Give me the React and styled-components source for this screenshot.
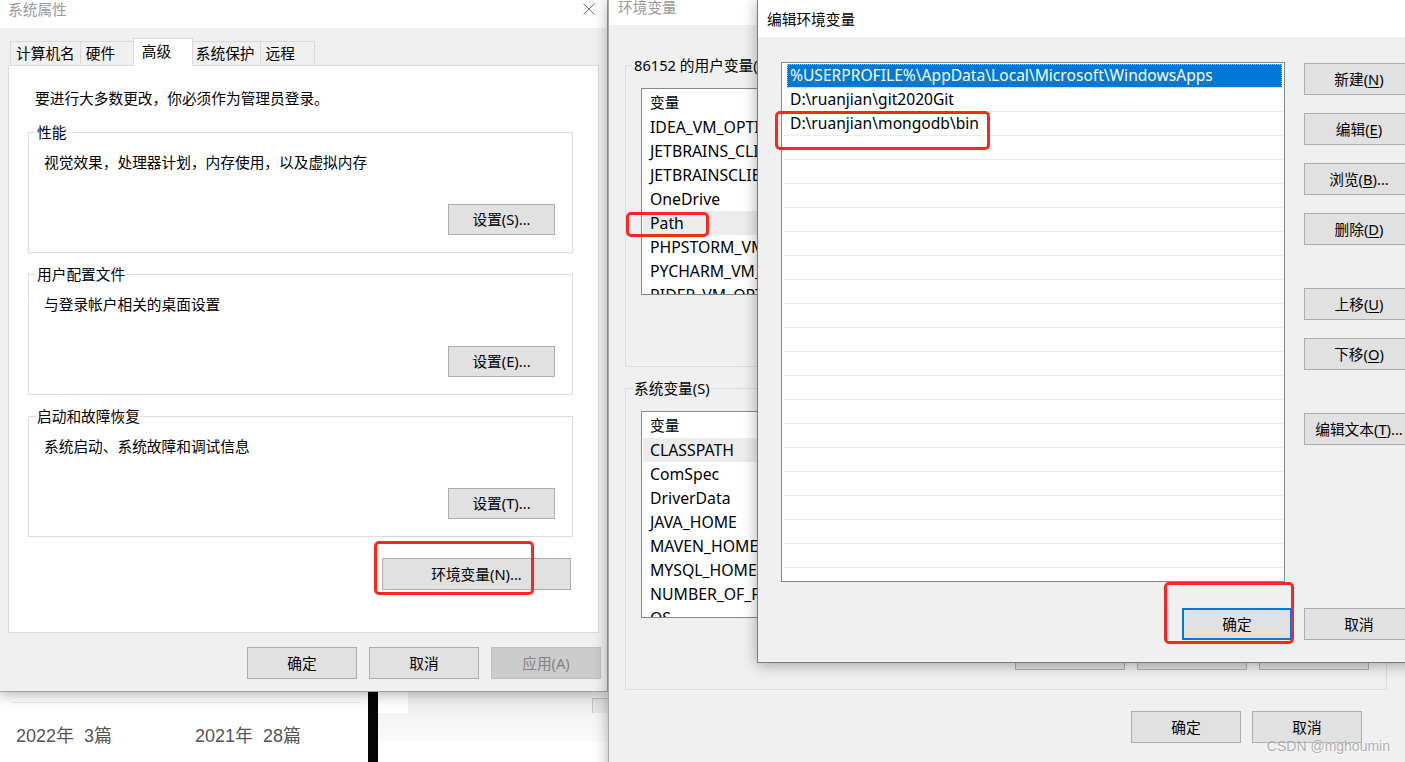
import React from "react";
import styled, { createGlobalStyle, css } from "styled-components";

const UI_FONT = `"Noto Sans", "Noto Sans CJK SC", sans-serif`;

const Global = createGlobalStyle`
  html, body { margin: 0; padding: 0; background: #fff; }
  body { font-family: ${UI_FONT}; }
  * { box-sizing: border-box; }
`;

const Desktop = styled.div`
  position: relative;
  width: 1405px;
  height: 762px;
  overflow: hidden;
  background: #fff;
  font-family: ${UI_FONT};
  font-size: 14.7px;
  color: #000;
`;

/* ---------- page behind the dialogs ---------- */
const BackPage = styled.div`
  display: flex;
  height: 100%;
  padding-top: 691px;
`;
const ArchiveColumn = styled.div`
  width: 368px;
  padding: 11px 8px 0 12px;
`;
const ArchiveDivider = styled.div`
  height: 1px;
  background: #e9e9e9;
`;
const ArchiveRow = styled.div`
  display: grid;
  grid-template-columns: 179px auto;
  padding-left: 4px;
  margin-top: 22px;
  font-family: "Liberation Sans", Arial, "Noto Sans CJK SC", sans-serif;
  font-size: 18px;
  line-height: 22px;
  color: #555;
  white-space: pre;
`;
const BlackBar = styled.div`
  width: 10px;
  background: #050505;
`;
const BackRight = styled.div`
  width: 230px;
  display: flex;
  flex-direction: column;
`;
const BackStrip = styled.div`
  height: 22px;
  display: flex;
  padding-left: 30px;
`;
const BackGray = styled.div`
  flex: 1;
  background: #f0f0f0;
  display: flex;
  justify-content: flex-end;
  align-items: flex-end;
`;
const BackGrayKnob = styled.div`
  width: 16px;
  height: 15px;
  background: #e6e6e6;
  border-left: 1px solid #c4c4c4;
  border-top: 1px solid #c4c4c4;
`;
const BackFade = styled.div`
  height: 29px;
  background: linear-gradient(#f3f3f3, #fbfbfb);
`;

/* ---------- generic window pieces ---------- */
const Window = styled.section`
  position: absolute;
  left: ${(p) => p.$x}px;
  top: ${(p) => p.$y}px;
  width: ${(p) => p.$w}px;
  height: ${(p) => p.$h}px;
  z-index: ${(p) => p.$z};
  display: flex;
  flex-direction: column;
  background: #f0f0f0;
  border: 1px solid ${(p) => p.$border};
  box-shadow: 0 2px 14px rgba(0, 0, 0, 0.32);
`;

const TitleBar = styled.header`
  flex: none;
  display: flex;
  align-items: ${(p) => (p.$center ? "center" : "flex-start")};
  height: ${(p) => p.$h}px;
  padding-left: ${(p) => p.$pad}px;
  background: #fff;
  color: ${(p) => (p.$active ? "#000" : "#9a9a9a")};
  line-height: ${(p) => p.$lh || 18}px;
`;

const CloseIcon = styled.svg`
  margin: 3px 12px 0 auto;
  width: 12px;
  height: 12px;
`;

const Button = styled.button`
  flex: none;
  width: ${(p) => p.$w || 110}px;
  height: ${(p) => p.$h || 32}px;
  padding: 0;
  font: 14.7px/1 ${UI_FONT};
  color: #000;
  background: #e1e1e1;
  border: 1px solid #adadad;
  white-space: nowrap;
  ${(p) =>
    p.$disabled &&
    css`
      background: #cccccc;
      border-color: #bfbfbf;
      color: #838383;
    `}
  ${(p) =>
    p.$default &&
    css`
      border: 2px solid #0078d7;
    `}
`;

const Key = styled.span`
  text-decoration: underline;
  text-underline-offset: 2px;
`;

const GroupBox = styled.div`
  position: relative;
  flex: none;
  height: ${(p) => p.$h}px;
  border: 1px solid #dcdcdc;
  display: flex;
  flex-direction: column;
  padding: ${(p) => p.$pad};
  & + & {
    margin-top: ${(p) => p.$gap}px;
  }
`;
const GroupLabel = styled.span`
  position: absolute;
  left: 7px;
  top: -11px;
  padding: 0 1px;
  line-height: 20px;
  background: ${(p) => p.$bg};
  white-space: nowrap;
`;

/* ---------- 系统属性 ---------- */
const SysBody = styled.div`
  padding: 10px 8px 0 8px;
  display: flex;
  flex-direction: column;
`;
const TabStrip = styled.div`
  position: relative;
  z-index: 1;
  display: flex;
  align-items: flex-end;
  height: 28px;
  margin-bottom: -1px;
  padding-left: 2px;
`;
const Tab = styled.div`
  position: relative;
  min-width: 55px;
  height: 24px;
  margin-bottom: 1px;
  padding: 0 5px;
  border: 1px solid #d9d9d9;
  border-bottom: none;
  background: #f0f0f0;
  line-height: 23px;
  white-space: nowrap;
  & + & {
    margin-left: -1px;
  }
  ${(p) =>
    p.$active &&
    css`
      z-index: 2;
      min-width: 60px;
      height: 28px;
      margin-bottom: 0;
      padding: 0 8px;
      background: #fff;
      line-height: 25px;
      && {
        margin-left: -2px;
        margin-right: -2px;
      }
    `}
`;
const TabPanel = styled.div`
  height: 568px;
  display: flex;
  flex-direction: column;
  padding: 22px 25px 0 19px;
  background: #fff;
  border: 1px solid #d9d9d9;
`;
const Notice = styled.p`
  margin: 0 0 24px 7px;
  line-height: 20px;
`;
const GroupText = styled.div`
  line-height: 20px;
`;
const GroupAction = styled(Button)`
  margin-top: auto;
  align-self: flex-end;
`;
const EnvButton = styled(Button)`
  margin: 21px 2px 0 0;
  align-self: flex-end;
`;
const DialogFooter = styled.div`
  display: flex;
  justify-content: flex-end;
  gap: ${(p) => p.$gap}px;
  padding: ${(p) => p.$pad};
  width: ${(p) => (p.$w ? `${p.$w}px` : "auto")};
`;

/* ---------- 环境变量 ---------- */
const EnvBody = styled.div`
  display: flex;
  flex-direction: column;
  padding: 40px 19px 0 16px;
`;
const VarList = styled.div`
  flex: none;
  height: 207px;
  padding: 0 1px;
  background: #fff;
  border: 1px solid #828790;
  overflow: hidden;
`;
const VarHeader = styled.div`
  height: 26px;
  line-height: 26px;
  padding-left: 7px;
`;
const VarItem = styled.div`
  height: 24px;
  line-height: 24px;
  padding-left: 7px;
  font-size: 15.8px;
  white-space: nowrap;
  background: ${(p) => (p.$sel ? "#ececec" : "transparent")};
`;
const VarButtons = styled.div`
  display: flex;
  justify-content: flex-end;
  gap: 12px;
  margin-top: 20px;
`;

/* ---------- 编辑环境变量 ---------- */
const EditBody = styled.div`
  display: flex;
  flex-direction: column;
  padding: 25px 0 0 23px;
`;
const EditMain = styled.div`
  display: flex;
  align-items: flex-start;
`;
const PathList = styled.div`
  flex: none;
  width: 504px;
  height: 520px;
  padding: 1px 1px 0;
  background: #fff;
  border: 1px solid #828790;
  overflow: hidden;
`;
const PathRow = styled.div`
  height: 24px;
  line-height: 23px;
  padding-left: 7px;
  font-size: 15.6px;
  border-bottom: 1px solid #ebebeb;
  white-space: nowrap;
  ${(p) =>
    p.$sel &&
    css`
      margin: 0 1px 0 4px;
      padding-left: 3px;
      background: #0078d7;
      color: #fff;
      outline: 1px dotted rgba(255, 190, 120, 0.9);
      outline-offset: -1px;
    `}
`;
const SideButtons = styled.div`
  display: flex;
  flex-direction: column;
  gap: 18px;
  margin: 1px 0 0 19px;
`;
const SideButton = styled(Button)`
  ${(p) =>
    p.$spaced &&
    css`
      margin-top: 25px;
    `}
`;

/* ---------- overlays ---------- */
const Highlight = styled.div`
  position: absolute;
  z-index: 20;
  left: ${(p) => p.$x}px;
  top: ${(p) => p.$y}px;
  width: ${(p) => p.$w}px;
  height: ${(p) => p.$h}px;
  border: 3px solid #f7291f;
  border-radius: 5px;
  pointer-events: none;
`;
const Watermark = styled.div`
  position: absolute;
  z-index: 21;
  right: 15px;
  bottom: 8px;
  font-family: "Liberation Sans", Arial, sans-serif;
  font-size: 14px;
  color: rgba(110, 110, 110, 0.55);
  text-shadow: 0 0 2px #fff;
`;

const userVars = [
  "IDEA_VM_OPTIONS",
  "JETBRAINS_CLIENT_VM_OPTIONS",
  "JETBRAINSCLIENT_VM_OPTIONS",
  "OneDrive",
  "Path",
  "PHPSTORM_VM_OPTIONS",
  "PYCHARM_VM_OPTIONS",
  "RIDER_VM_OPTIONS",
];
const sysVars = [
  "CLASSPATH",
  "ComSpec",
  "DriverData",
  "JAVA_HOME",
  "MAVEN_HOME",
  "MYSQL_HOME",
  "NUMBER_OF_PROCESSORS",
  "OS",
  "Path",
];
const paths = [
  "%USERPROFILE%\\AppData\\Local\\Microsoft\\WindowsApps",
  "D:\\ruanjian\\git2020Git",
  "D:\\ruanjian\\mongodb\\bin",
];

function SystemProperties() {
  const groups = [
    { title: "性能", text: "视觉效果，处理器计划，内存使用，以及虚拟内存", btn: "设置(S)..." },
    { title: "用户配置文件", text: "与登录帐户相关的桌面设置", btn: "设置(E)..." },
    { title: "启动和故障恢复", text: "系统启动、系统故障和调试信息", btn: "设置(T)..." },
  ];
  return (
    <Window $x={-1} $y={-1} $w={609} $h={693} $z={1} $border="#a0a0a0">
      <TitleBar $h={28} $pad={8}>
        系统属性
        <CloseIcon viewBox="0 0 12 12">
          <path d="M0.5 0.5 L11.5 11.5 M11.5 0.5 L0.5 11.5" stroke="#6b6b6b" strokeWidth="1" fill="none" />
        </CloseIcon>
      </TitleBar>
      <SysBody>
        <TabStrip>
          <Tab>计算机名</Tab>
          <Tab>硬件</Tab>
          <Tab $active>高级</Tab>
          <Tab>系统保护</Tab>
          <Tab>远程</Tab>
        </TabStrip>
        <TabPanel>
          <Notice>要进行大多数更改，你必须作为管理员登录。</Notice>
          {groups.map((g) => (
            <GroupBox key={g.title} $h={121} $gap={21} $pad="19px 17px 17px 15px">
              <GroupLabel $bg="#fff">{g.title}</GroupLabel>
              <GroupText>{g.text}</GroupText>
              <GroupAction $w={107} $h={31}>
                {g.btn}
              </GroupAction>
            </GroupBox>
          ))}
          <EnvButton $w={189}>环境变量(N)...</EnvButton>
        </TabPanel>
      </SysBody>
      <DialogFooter $gap={12} $pad="14px 6px 0 0">
        <Button>确定</Button>
        <Button>取消</Button>
        <Button $disabled>应用(A)</Button>
      </DialogFooter>
    </Window>
  );
}

function VarGroup({ title, items, selected }) {
  return (
    <GroupBox $h={302} $gap={21} $pad="22px 17px 0 15px">
      <GroupLabel $bg="#f0f0f0">{title}</GroupLabel>
      <VarList>
        <VarHeader>变量</VarHeader>
        {items.map((name) => (
          <VarItem key={name} $sel={name === selected}>
            {name}
          </VarItem>
        ))}
      </VarList>
      <VarButtons>
        <Button>新建...</Button>
        <Button>编辑...</Button>
        <Button>删除</Button>
      </VarButtons>
    </GroupBox>
  );
}

function EnvironmentVariables() {
  return (
    <Window $x={608} $y={-1} $w={799} $h={800} $z={2} $border="#a8a8a8">
      <TitleBar $h={25} $pad={9} $lh={14}>
        环境变量
      </TitleBar>
      <EnvBody>
        <VarGroup title="86152 的用户变量(U)" items={userVars} selected="Path" />
        <VarGroup title="系统变量(S)" items={sysVars} selected="CLASSPATH" />
      </EnvBody>
      <DialogFooter $gap={11} $pad="21px 44px 0 0">
        <Button>确定</Button>
        <Button>取消</Button>
      </DialogFooter>
    </Window>
  );
}

function EditEnvironmentVariable() {
  const rows = Array.from({ length: 22 }, (_, i) => paths[i] || "");
  return (
    <Window $x={757} $y={-1} $w={700} $h={664} $z={3} $border="#7a7a7a">
      <TitleBar $h={37} $pad={9} $active $center>
        编辑环境变量
      </TitleBar>
      <EditBody>
        <EditMain>
          <PathList>
            {rows.map((r, i) => (
              <PathRow key={i} $sel={i === 0}>
                {r}
              </PathRow>
            ))}
          </PathList>
          <SideButtons>
            <SideButton>
              新建(<Key>N</Key>)
            </SideButton>
            <SideButton>
              编辑(<Key>E</Key>)
            </SideButton>
            <SideButton>
              浏览(<Key>B</Key>)...
            </SideButton>
            <SideButton>
              删除(<Key>D</Key>)
            </SideButton>
            <SideButton $spaced>
              上移(<Key>U</Key>)
            </SideButton>
            <SideButton>
              下移(<Key>O</Key>)
            </SideButton>
            <SideButton $spaced>
              编辑文本(<Key>T</Key>)...
            </SideButton>
          </SideButtons>
        </EditMain>
        <DialogFooter $gap={12} $pad="26px 0 0 0" $w={633}>
          <Button $default>确定</Button>
          <Button>取消</Button>
        </DialogFooter>
      </EditBody>
    </Window>
  );
}

export default function App() {
  return (
    <>
      <Global />
      <Desktop>
        <BackPage>
          <ArchiveColumn>
            <ArchiveDivider />
            <ArchiveRow>
              <span>2022年  3篇</span>
              <span>2021年  28篇</span>
            </ArchiveRow>
          </ArchiveColumn>
          <BlackBar />
          <BackRight>
            <BackStrip>
              <BackGray>
                <BackGrayKnob />
              </BackGray>
            </BackStrip>
            <BackFade />
          </BackRight>
        </BackPage>
        <SystemProperties />
        <EnvironmentVariables />
        <EditEnvironmentVariable />
        <Highlight $x={374} $y={541} $w={160} $h={54} />
        <Highlight $x={626} $y={212} $w={83} $h={25} />
        <Highlight $x={775} $y={111} $w={215} $h={39} />
        <Highlight $x={1164} $y={582} $w={130} $h={62} />
        <Watermark>CSDN @mghoumin</Watermark>
      </Desktop>
    </>
  );
}
